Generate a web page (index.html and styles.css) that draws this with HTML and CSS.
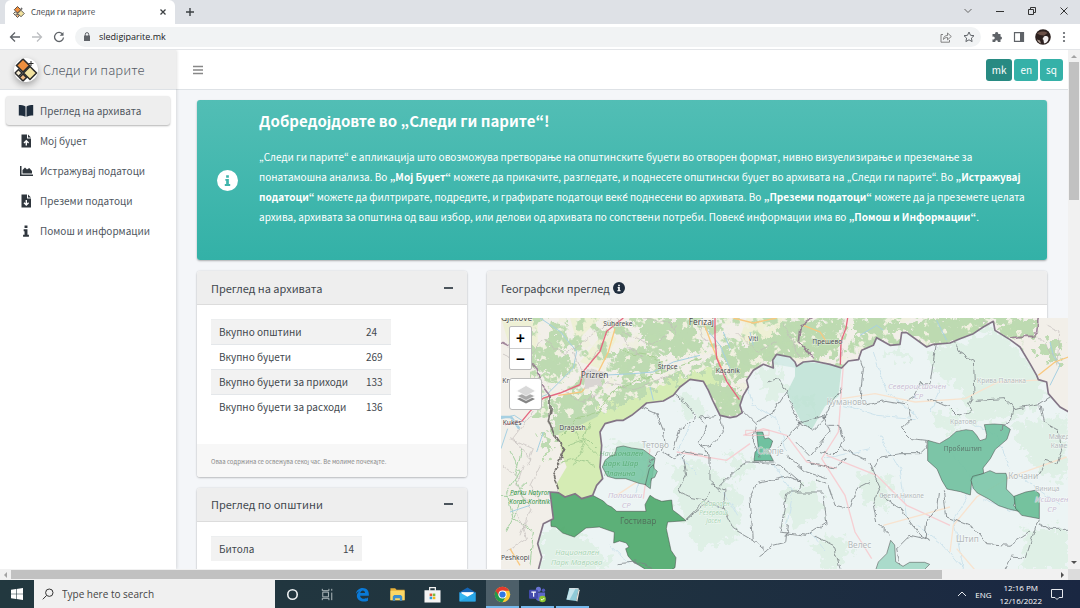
FILE: index.html
```html
<!DOCTYPE html>
<html lang="mk">
<head>
    <meta charset="UTF-8">
    <meta name="viewport" content="width=device-width, initial-scale=1.0">
    <title>Следи ги парите</title>
    <link rel="stylesheet" href="styles.css">
</head>
<body>
    <svg class="sprite" aria-hidden="true">
        <symbol id="logo" viewBox="0 0 24 24">
            <g stroke="#2b2b2b" stroke-width="1.5">
                <path d="M9 1l6.500 6.500L9 14 2.500 7.500z" fill="#ee8f3e"/>
                <path d="M16 8.500l6.500 6.500-6.500 6.500-6.500-6.500z" fill="#f2e2a0"/>
                <path d="M4.500 11.500L8 15l-3.500 3.500L1 15z" fill="#f4ead0"/>
                <path d="M9 16l3.500 3.500L9 23l-3.500-3.500z" fill="#f0b983"/>
                <path d="M17 3v5M14.500 5.500h5" stroke-width="1"/>
            </g>
        </symbol>
        <symbol id="info" viewBox="0 0 24 24">
            <path d="M9.500 2.500h5v4.300h-5zM8 9h6.500v9.500H17V22H7v-3.500h2.500v-6H8z"/>
        </symbol>
    </svg>

    <!-- browser -->
    <header class="tabstrip">
        <div class="tab">
            <svg class="tab-logo"><use href="#logo"/></svg>
            <span class="tab-title">Следи ги парите</span>
            <button class="plain" aria-label="Close tab"><svg width="8" height="8" viewBox="0 0 8 8" stroke="#3c4043" stroke-width="1.300"><path d="M1.500 1.500l5 5M6.500 1.500l-5 5"/></svg></button>
        </div>
        <button class="plain new-tab" aria-label="New tab"><svg width="10" height="10" viewBox="0 0 10 10" stroke="#3c4043" stroke-width="1.400"><path d="M5 1v8M1 5h8"/></svg></button>
        <div class="window-buttons">
            <button class="plain" aria-label="Search tabs"><svg width="10" height="10" viewBox="0 0 10 10" stroke="#666" fill="none"><path d="M1.500 3L5 6.500 8.500 3"/></svg></button>
            <button class="plain" aria-label="Minimize"><svg width="10" height="10" viewBox="0 0 10 10" stroke="#333"><path d="M1 5.500h8"/></svg></button>
            <button class="plain" aria-label="Restore"><svg width="10" height="10" viewBox="0 0 10 10" stroke="#333" fill="none"><path d="M1.500 3.500h5v5h-5zM3.500 3V1.500h5v5H7"/></svg></button>
            <button class="plain" aria-label="Close"><svg width="10" height="10" viewBox="0 0 10 10" stroke="#333"><path d="M1.500 1.500l7 7M8.500 1.500l-7 7"/></svg></button>
        </div>
    </header>
    <div class="toolbar">
        <button class="plain" aria-label="Back"><svg width="12" height="12" viewBox="0 0 12 12" stroke="#5f6368" stroke-width="1.300" fill="none"><path d="M11 6H2M6 1.500L1.500 6 6 10.500"/></svg></button>
        <button class="plain" aria-label="Forward"><svg width="12" height="12" viewBox="0 0 12 12" stroke="#bcbec1" stroke-width="1.300" fill="none"><path d="M1 6h9M6 1.500L10.500 6 6 10.500"/></svg></button>
        <button class="plain" aria-label="Reload"><svg width="12" height="12" viewBox="0 0 12 12" stroke="#5f6368" stroke-width="1.300" fill="none"><path d="M9.800 3.500A4.500 4.500 0 1 0 10.500 6.500"/><path d="M10.500 1v3.800H6.700z" fill="#5f6368" stroke="none"/></svg></button>
        <div class="address">
            <svg width="8" height="9" viewBox="0 0 8 9"><path d="M1 3.500h6V9H1z" fill="#5f6368"/><path d="M2.300 4V2.300a1.700 1.700 0 0 1 3.400 0V4" fill="none" stroke="#5f6368"/></svg>
            <input class="url" type="text" value="sledigiparite.mk" aria-label="Address">
            <button class="plain" aria-label="Share"><svg width="12" height="12" viewBox="0 0 12 12" stroke="#777" stroke-width=".9" fill="none"><path d="M3 3.500H1v7.700h8.500V9M3.500 8.500c0-3 1.700-4 4-4V2L11.300 5.500 7.500 8.800V6.500c-2 0-3 .5-4 2z"/></svg></button>
            <button class="plain" aria-label="Bookmark"><svg width="12" height="12" viewBox="0 0 12 12" stroke="#5f6368" fill="none"><path d="M6 1l1.500 3.300 3.500.4-2.600 2.400.7 3.500L6 8.800l-3.100 1.800.7-3.500L1 4.700l3.500-.4z"/></svg></button>
        </div>
        <button class="plain" aria-label="Extensions"><svg width="12" height="12" viewBox="0 0 12 12" fill="#5f6368"><path d="M1.500 3h2.600a1.600 1.600 0 1 1 3.100 0H9.500v2.500a1.500 1.500 0 1 1 0 3V11H6.800a1.300 1.300 0 1 0-2.500 0H1.500V8.300a1.500 1.500 0 1 0 0-2.600z"/></svg></button>
        <button class="plain" aria-label="Side panel"><svg width="12" height="12" viewBox="0 0 12 12"><path d="M1.500 1.700h9v8.600h-9z" fill="none" stroke="#5f6368" stroke-width="1.200"/><path d="M7 1.500h4v9H7z" fill="#5f6368"/></svg></button>
        <button class="plain" aria-label="Profile"><svg width="16" height="16" viewBox="0 0 16 16"><circle cx="8" cy="8" r="7.800" fill="#2c211f"/><path d="M2 4.500C5 2 10 2 12.500 4L9 6.500 5 6z" fill="#6b5148"/><path d="M9 7.500c3-1 4.500 0 4.500 2S12 14 9.500 14.500C8 13 9.500 11 7.500 10z" fill="#f1eff0"/><path d="M2 10.500l3 1 1 3C3.500 13.500 2.500 12 2 10.500z" fill="#a9988f"/></svg></button>
        <button class="plain menu-dots" aria-label="Menu"><svg width="4" height="12" viewBox="0 0 4 12" fill="#5f6368"><circle cx="2" cy="2" r="1.100"/><circle cx="2" cy="6" r="1.100"/><circle cx="2" cy="10" r="1.100"/></svg></button>
    </div>

    <div class="viewport">
        <aside class="sidebar">
            <a class="brand" href="#">
                <svg class="brand-logo"><use href="#logo"/></svg>
                <span>Следи ги парите</span>
            </a>
            <nav class="nav">
                <a class="nav-link active" href="#"><svg viewBox="0 0 16 14"><path d="M7.500 2.500C6 1.300 3 1 .8 1v10.500c2.200 0 5.200.3 6.700 1.300zM8.500 2.500C10 1.300 13 1 15.200 1v10.500c-2.200 0-5.200.3-6.700 1.300z"/></svg>Преглед на архивата</a>
                <a class="nav-link" href="#"><svg viewBox="0 0 16 14"><path d="M3.500.5h5.500v4h4v9H3.500zM10 .5l3 3h-3z"/><path d="M8.300 11.500V7.500M6 9l2.300-2.300L10.600 9" fill="none" stroke="#fff" stroke-width="1.400"/></svg>Мој буџет</a>
                <a class="nav-link" href="#"><svg viewBox="0 0 16 14"><path d="M2 2h1.500v8.500H15V12H2z"/><path d="M4.500 9.500V6L7 3.500l2 2 2.200-1.500L14 7v2.500z"/></svg>Истражувај податоци</a>
                <a class="nav-link" href="#"><svg viewBox="0 0 16 14"><path d="M3.500.5h5.500v4h4v9H3.500zM10 .5l3 3h-3z"/><path d="M8.300 6v4.500M6 8.700L8.300 11l2.300-2.300" fill="none" stroke="#fff" stroke-width="1.400"/></svg>Преземи податоци</a>
                <a class="nav-link" href="#"><svg><use href="#info"/></svg>Помош и информации</a>
            </nav>
        </aside>

        <main class="main">
            <div class="topbar">
                <button class="plain" aria-label="Мени"><svg width="10" height="10" viewBox="0 0 10 10" stroke="#888" stroke-width="1.400"><path d="M0 1.500h10M0 5h10M0 8.500h10"/></svg></button>
                <div class="languages">
                    <button class="lang current">mk</button>
                    <button class="lang">en</button>
                    <button class="lang">sq</button>
                </div>
            </div>

            <div class="content">
                <section class="banner">
                    <span class="banner-icon"><svg><use href="#info"/></svg></span>
                    <div>
                        <h1>Добредојдовте во „Следи ги парите“!</h1>
                        <p>„Следи ги парите“ е апликација што овозможува претворање на општинските буџети во отворен формат, нивно визуелизирање и преземање за понатамошна анализа. Во <b>„Мој Буџет“</b> можете да прикачите, разгледате, и поднесете општински буџет во архивата на „Следи ги парите“. Во <b>„Истражувај податоци“</b> можете да филтрирате, подредите, и графирате податоци веќе поднесени во архивата. Во <b>„Преземи податоци“</b> можете да ја преземете целата архива, архивата за општина од ваш избор, или делови од архивата по сопствени потреби. Повеќе информации има во <b>„Помош и Информации“</b>.</p>
                    </div>
                </section>

                <div class="row">
                    <div class="col-left">
                        <section class="card">
                            <div class="card-header"><h2>Преглед на архивата</h2><button class="plain collapse" aria-label="Собери"></button></div>
                            <div class="card-body archive">
                                <table>
                                    <tr><td>Вкупно општини</td><td>24</td></tr>
                                    <tr><td>Вкупно буџети</td><td>269</td></tr>
                                    <tr><td>Вкупно буџети за приходи</td><td>133</td></tr>
                                    <tr><td>Вкупно буџети за расходи</td><td>136</td></tr>
                                </table>
                            </div>
                            <div class="card-footer">Оваа содржина се освежува секој час. Ве молиме почекајте.</div>
                        </section>
                        <section class="card">
                            <div class="card-header"><h2>Преглед по општини</h2><button class="plain collapse" aria-label="Собери"></button></div>
                            <div class="card-body">
                                <table class="towns">
                                    <tr><td>Битола</td><td>14</td></tr>
                                </table>
                            </div>
                        </section>
                    </div>

                    <div class="col-right">
                        <section class="card">
                            <div class="card-header"><h2>Географски преглед</h2><span class="hint"><svg><use href="#info"/></svg></span></div>
                            <div class="card-body map-body">
                                <div class="map">
                                    <svg class="map-canvas" viewBox="33 158 1701 756">
                                        <defs>
                                            <filter id="ragged" x="-5%" y="-5%" width="110%" height="110%" color-interpolation-filters="sRGB">
                                                <feTurbulence type="fractalNoise" baseFrequency="0.045" numOctaves="3" seed="4"/>
                                                <feDisplacementMap in="SourceGraphic" scale="70" xChannelSelector="R" yChannelSelector="G"/>
                                            </filter>
                                            <filter id="rough" x="-5%" y="-5%" width="110%" height="110%" color-interpolation-filters="sRGB">
                                                <feTurbulence type="fractalNoise" baseFrequency="0.04" numOctaves="2" seed="9"/>
                                                <feDisplacementMap in="SourceGraphic" scale="18" xChannelSelector="R" yChannelSelector="G"/>
                                            </filter>
                                            <filter id="speckle" x="0" y="0" width="100%" height="100%" color-interpolation-filters="sRGB">
                                                <feTurbulence type="fractalNoise" baseFrequency="0.028" numOctaves="4" seed="12"/>
                                                <feColorMatrix values="0 0 0 0 0.74  0 0 0 0 0.86  0 0 0 0 0.69  12 0 0 0 -6.4"/>
                                                <feComposite in2="SourceGraphic" operator="in"/>
                                            </filter>
                                            <filter id="clearings" x="0" y="0" width="100%" height="100%" color-interpolation-filters="sRGB">
                                                <feTurbulence type="fractalNoise" baseFrequency="0.04" numOctaves="4" seed="31"/>
                                                <feColorMatrix values="0 0 0 0 0.94  0 0 0 0 0.94  0 0 0 0 0.88  12 0 0 0 -7.2"/>
                                                <feComposite in2="SourceGraphic" operator="in"/>
                                            </filter>
                                            <clipPath id="country"><path id="country-shape" d="M145 914l10-39-12-40 17-60 30-15-10-80 25 2 20 13 30-10 20 15 33-10 12-30 18-20-8-35 5-65-5-40 15-25 35-10h20l25-15 25-20 20-17 50-6 30-17 20-25 30-23 40 6 15 27 13 30 12 25 10 20 30 7 20-4 17-11-7-22 10-30 15-25-5-20 20-30 30-18 30 11-2-23 12-18 40 8 15 15 5 13 20-13 30-3 50 10 35 11 20-21 30-4 10-28 35-15 10-23 40 23 30-3 5-35h15l60 43 20-8 50-4 30-13 40-15 30-20 30-17 5 27 45 28 30 22 30 50 20 35 5 13 25 7 5 35 35 40 30 17v477z"/></clipPath>
                                        </defs>
                                        <path fill="#f2efe9" d="M33 158h1701v756H33z"/>
                                        <path fill="#eef0d5" d="M33 158h110v90H60zM770 158h120v60l-80 50-60-50zM240 158h90l-70 70zM270 290l80-100 30 30-50 90z"/>
                                        <g fill="#bddab1" filter="url(#ragged)">
                                            <path d="M180 170l40 10 10 70-50 20zM130 250l60-10 60 60-30 50-60-20zM365 265l80-20 60 15 20 50-90 20-70-10zM430 158h170l20 50 20 50-90 20-80-30zM690 230l80 10 60-20 60-60h170l-10 110-140 10-110 10-60 80-30-60zM620 300l60-20 30 80 50 30-10 70-70 10-40-90-30-40zM350 410l60-60 100-10 120-30 10 30-60 30-60 40-90 30-60 40zM190 400l60-20 60 10 30 50-30 70-60 20-60-30zM1090 158h120v40l-100 70zM1180 170l200-12 100 60-130 30zM1350 158h300l-10 50-80 10-50-60-60 50zM1640 260l40-40 40 20-20 60zM150 500l40 40-20 50z"/>
                                        </g>
                                        <path filter="url(#speckle)" d="M120 158h1480v300H120z"/>
                                        <path filter="url(#clearings)" d="M120 158h1480v300H120z"/>
                                        <path fill="#d5ecb4" filter="url(#ragged)" d="M330 490l-10-50 70-20 90-40 110-50 80-20 10 50-60 0-50 50-80 25-60 40-60 20z"/>
                                        <path fill="#d5ecb4" d="M330 450l-60 30-65 25 10 60 15 40-30 50 15 55 30 0 30-10 50 0 60-90z"/>
                                        <g fill="none" stroke="#a9cf95" stroke-width="3" filter="url(#rough)">
                                            <path d="M215 510l50-50 60-20 40-60 90-40 120-40 60-20M215 590l40-10 60 20M230 540l60-20 30 30M400 260l80 10 40 20-10 40M250 490l30 50-30 60M300 470l-20 60 40 40"/>
                                            <path d="M50 800l50-100-25-60 20-90M33 690h40l40-40M60 560l30 60-40 60 20 80 60 40-10 100" stroke="#a4cfa0"/>
                                        </g>
                                        <g fill="none" stroke="#a6d0e2" stroke-width="3">
                                            <path d="M150 158l60 40 50 60-10 50-80 80-50 20M33 460l40-10 30 20M330 330l100-5 60-5 60-30 80-20M480 365l10 40M720 250l-20-50M790 240l-10-40M1110 210l50-30 20 15M1340 165l30 60M1680 230l10 40 20 30-30 60M33 550l20-60M640 180l50 60 30 70M60 740l60-20M160 500l-20 60"/>
                                            <path d="M33 455h30l25 35" stroke-width="8"/>
                                        </g>
                                        <g fill="none" stroke="#c3bdbb" stroke-width="2" filter="url(#rough)">
                                            <path d="M33 260l60 40 70-80 60 50 80-60 60-50M60 340l60 30M380 158l30 80 50 40M400 200l90 40 70-60M460 158l80 10 20 40M340 350l90 20 110-40M620 158l20 60 40 30M250 260l40 100M100 600l-20 60 40 70-30 80M60 520l70 30-20 50M1060 158l-10 120M1670 180l40 20-10 100M50 860l60-40-30-80M740 200l60 60 60-30M880 170l50 110M330 240l-40 70M150 600l-30 60 40 60M40 600l50 40M130 440l-60 80 50 60M210 370l60 40 50-20M1640 210l50 60M1480 165l30 20"/>
                                        </g>
                                        <g fill="none">
                                            <path d="M375 190l-20 70-30 60-50 60-70 10M640 170l30 80 30 70M730 158l60 15 70-15M940 180l50 20 20 30M60 850l30 50M1645 330l50-40 40-15" stroke="#f9c87f" stroke-width="4"/>
                                            <path d="M400 158l-50 40-20 60-50 60-10 40-60 25-50 15-40 40-25 30-50 10" stroke="#e4677f" stroke-width="4"/>
                                            <path d="M675 158v60l5 60 30 70 38 55M1073 158l-5 30-15 40-2 70" stroke="#e4677f" stroke-width="4"/>
                                        </g>
                                        <path d="M290 310l50 10-10 40-50 10z" fill="#d9d5d2" filter="url(#rough)"/>
                                        <g fill="none" stroke="#8d6d88" stroke-width="5" stroke-opacity=".8" filter="url(#rough)">
                                            <path d="M33 233l25 12M122 290l20 25 10 40 30 40M970 282l-15-25-30-25 5-50 40-24M1560 218l30-5h35l15-15 5-40"/>
                                        </g>
                                        <path d="M180 395v40l-5 30 15 40 35 50-35 75 15 45" fill="none" stroke="#77736f" stroke-width="5" filter="url(#rough)"/>

                                        <use href="#country-shape" fill="#ecf4f4"/>
                                        <g clip-path="url(#country)">
                                            <g fill="#dff0e6" filter="url(#ragged)">
                                                <path d="M150 800l60-10 100 40 60 70-60 30H150zM350 540l110-20 20 60-80 20zM540 600l100-10 60 60 60 40-20 130-110 30-60-120zM560 400l50-20 40 60-60 20zM800 320l60-20 30 80-50 30zM1310 260l120-40 90-40 110 130 40 80-70 60-160 20-30-100-60-30zM1560 480l170-30v200l-90-30zM1600 790h134v124h-134zM870 680l110-30 20 100-100 40zM1100 620l110 20-20 90-70-20zM700 560l100 30-50 60zM900 400l60-10 20 60zM960 830l90-20 40 60-80 50zM1320 440l100 10-40 70zM1180 260l60-20 30 60z"/>
                                            </g>
                                            <path d="M915 285l140 18-10 90-40 30-40 70-30-20-30-60-15-30 25-50z" fill="#b9e0d2" fill-opacity=".75"/>
                                            <path d="M860 262l55 25v20l-90-15z" fill="#c6e4de" fill-opacity=".6"/>
                                            <g fill="none" stroke="#cde3ec" stroke-width="3" filter="url(#rough)">
                                                <path d="M400 560l60 60-30 80M600 480l-40 80 60 70M760 330l30 90 70 40 30 100M850 600l60 80-20 100M1150 260l40 120 100 80M1060 420l100 30 120 10M1170 510l60 100 20 150M1350 370l-30 70M1380 560l80 90-70 110 30 150M1440 470l80 40 40 100M1480 700l90 40M960 800l50 60M700 680l40 70M1600 640l110 80M1000 580l140-30M360 840l60 60M1280 780l80 60 60 70"/>
                                            </g>
                                            <g fill="none" stroke="#f6cfd3" stroke-width="4">
                                                <path d="M1060 300l-15 200-50 80 70 110 30 110 50 80M760 510l60-20 70 20 60 80 90 20M1010 570l150 60 90 90 130 60M560 560l150 25 70-50M480 550l-20 150M600 560l60 20"/>
                                                <path d="M1055 400l100-15 120 25 150-10 100-50 210-10M1180 780l200-55M1380 860l10-80 70-85 100-60 170-60M1400 850l60 70M380 690l90-60" stroke="#f8e3cf"/>
                                            </g>
                                            <g stroke="#444" stroke-opacity=".75" stroke-width="2" stroke-linejoin="round">
                                                <path d="M180 680l25 2 20 13 15-8 15-2 20 15 15-8 18-2 32 17 12 12 13 6 15 13h88l-3-20 15-28 15 10 20 8 30-4 3 30 20 15 20 17-55 4-4 20 14 65 15 22-3 30-32 18-43-3-20-14-32-20-14-16-7-22 10-5-8-12-20-6-18 6 2-32-45-16-40 3-35 27-35-12-20-18-15-2z" fill="#4fa96d" fill-opacity=".92"/>
                                                <path d="M337 605l8-20 15-12 15-5 5-22 20-4 25 6 35 5 20 15 15 10-8 55-10 27-30-6-40-14-30 0-25-7z" fill="#74c3a0" fill-opacity=".85"/>
                                                <path d="M478 610l12-12 3 12 9 8-8 18-10 4-3 30-7-5-8-6z" fill="#74c3a0" fill-opacity=".85"/>
                                                <path d="M800 500h18l6 20 12-2 12 9-6 18-8 10 16 31h-58l3-25 10-12z" fill="#63bb97" fill-opacity=".9"/>
                                                <path d="M1313 525l35 10 30-18 20-18 30-6 20 3 12 14 10 16 18-6 2-12-7-30 30-2 28 2 20 14-10 30-35 30-15 28-22 28 2 16-35 15-5 50-30-10-40-8-15-25-15-35-28-25z" fill="#70c09f" fill-opacity=".9"/>
                                                <path d="M1443 645l5-12 30-8 22-9 18 8 30 0 3 12-2 35 30 30-8 20 20 18-35-8-30-10-30-20-34-18-12-14z" fill="#7cc6a8" fill-opacity=".9"/>
                                                <path d="M1572 693l35-13 28-5 13 10v75l-53-10-18-20z" fill="#68bd95" fill-opacity=".9"/>
                                                <path d="M1155 920l10-30 25-25 12-40 12 14 3 50 22 14 20-12 45 0 15 6-20 20z" fill="#a3d8c6" fill-opacity=".9"/>
                                            </g>
                                            <g fill="none" stroke="#7c8285" stroke-width="2.500" stroke-linejoin="round" filter="url(#rough)">
                                                <path d="M455 425l45 20 20 50 5 40-35 40-15 30M555 385l35 30 30 40-50 40-20 60M690 450l-60 5 20 30-25 50 35 30v80l30 30M690 450l10 50-35 40-30 5M760 437l40 40-10 50 20 50M800 470l50-30 40-60-25-40-30 10M890 385l15 40 25 50 40 20 30-30 20-45 35-50M790 590l80 10 70 60M850 590h-80l-30 20-50 50M665 655l40 20-5 55-40-20-30 20-45 35M700 730l30 60 60 35 35 30M790 825l-10-130 20-40 90-20 40 15-5 30M810 870l40-30 40-10 5-50M520 560l30 20 30-20 80 10M580 570l10 60-25 50 30 15 50 10M870 540l60-70 70-20 20 50-60 70-40-40M1015 480l30 0 15 45-10 20-20 20-40-10M1110 280l10 30-10 90 15 20 60-15 60 10 30-20 15-40h30l20-130 15-10M1390 225l20 40 40 20 5 100-20 30 10 20-40 15-30-30-60-20M1255 420l10 40-30 30 30 30 45 5 3 20-20 20-60 0-60 10-20 30M1460 405l80-5 30 25-10 40-30 25M1570 430l80-15 30-20M1650 420l10 50 45 25 10 60-15 40-35-10-20 50M1140 590l20 50 10 20-20 60 10 50 40 40M1170 690l60 40 60 80 30 15M1345 680l-5 50-30 40-5 50-45-10-40 40 10 50M1360 675l10 80 80 30 40 50 70 5 60-40M1645 760l-20 60-20 60-40-5-20 40M1648 775l30 17h60M1140 650l-40 20-20 60-45-10-20-60-40-20M1010 640l-60-20-60-50M970 810l60 30 20 70M870 800l80 10 60-40-10-90-110 0-15 100zM380 895l60-5 50 20M585 765l60-60 15-20M950 590l80 20 40-30M1050 545l80 40"/>
                                            </g>
                                        </g>
                                        <use href="#country-shape" fill="none" stroke="#837586" stroke-width="5" stroke-linejoin="round"/>
                                        <path fill="none" stroke="#f4b9be" stroke-width="2" d="M767 495h70v15h-70z"/>

                                        <g class="map-text">
                                            <text x="33" y="167" class="town">Gjakove</text>
                                            <text x="340" y="182">Suhareke</text>
                                            <text x="596" y="180" class="town">Ferizaj</text>
                                            <text x="775" y="226">Viti</text>
                                            <text x="503" y="311">Štrpce</text>
                                            <text x="272" y="338" class="town">Prizren</text>
                                            <text x="677" y="322">Kaçanik</text>
                                            <text x="967" y="237">Прешево</text>
                                            <text x="37" y="353">Kru</text>
                                            <text x="38" y="478">Kukës</text>
                                            <text x="208" y="494">Dragash</text>
                                            <text x="33" y="883">Peshkopi</text>
                                        </g>
                                        <g class="map-text faint">
                                            <text x="1010" y="418" class="town">Куманово</text>
                                            <text x="455" y="549" class="town">Тетово</text>
                                            <text x="802" y="566" class="town">Скопје</text>
                                            <text x="1461" y="352">Крива Паланка</text>
                                            <text x="1380" y="476">Кратово</text>
                                            <text x="1168" y="698">Свети Николе</text>
                                            <text x="1073" y="849" class="town">Велес</text>
                                            <text x="1398" y="830" class="town">Штип</text>
                                            <text x="1555" y="640" class="town">Кочани</text>
                                            <text x="1635" y="677">Виница</text>
                                            <text x="1676" y="522">Макед</text>
                                            <text x="1682" y="547">Каме</text>
                                            <g class="region">
                                                <text x="1194" y="370">Североисточен</text>
                                                <text x="1272" y="400">СР</text>
                                                <text x="354" y="698">Полошки</text>
                                                <text x="395" y="729">СР</text>
                                                <text x="1635" y="711">Источен</text>
                                                <text x="1672" y="741">СР</text>
                                            </g>
                                            <g class="park">
                                                <text x="196" y="869">Национален</text>
                                                <text x="183" y="899">Парк Маврово</text>
                                                <text x="632" y="723" class="small">Природен</text>
                                                <text x="628" y="748" class="small">Резерват</text>
                                                <text x="648" y="773" class="small">Јасен</text>
                                            </g>
                                        </g>
                                        <g class="map-text park strong">
                                            <text x="328" y="572" opacity=".45">Национален</text>
                                            <text x="340" y="602" opacity=".45">парк Шар</text>
                                            <text x="342" y="632" opacity=".45">Планина</text>
                                            <text x="60" y="690" class="small">Parku Natyror</text>
                                            <text x="58" y="715" class="small">Korab-Koritnik</text>
                                        </g>
                                        <g class="map-text plain-text" opacity=".6">
                                            <text x="390" y="775" class="town">Гостивар</text>
                                            <text x="1361" y="557">Пробиштип</text>
                                        </g>
                                    </svg>
                                    <div class="zoom-control">
                                        <button aria-label="Зголеми">+</button>
                                        <button aria-label="Намали">−</button>
                                    </div>
                                    <button class="layers" aria-label="Слоеви"><svg width="20" height="20" viewBox="0 0 20 20"><path d="M10 11l9 4-9 4.500L1 15z" fill="#858585"/><path d="M10 8l9 4-9 4.500L1 12z" fill="#aaa" stroke="#fff" stroke-width=".7"/><path d="M10 1.500L19.500 7 10 12 .5 7z" fill="#d9d9d9" stroke="#fff" stroke-width=".7"/></svg></button>
                                </div>
                            </div>
                        </section>
                    </div>
                </div>
            </div>
        </main>
        <div class="vscroll"><i class="arrow up"></i><div class="vthumb"></div><i class="arrow down"></i></div>
    </div>
    <div class="hscroll"><i class="arrow left"></i><div class="htrack"><div class="hthumb"></div></div><i class="arrow right"></i><span class="corner"></span></div>

    <!-- taskbar -->
    <footer class="taskbar">
        <button class="plain start" aria-label="Start"><svg width="12" height="12" viewBox="0 0 12 12" fill="#fff"><path d="M0 1.700l5-.7v4.700H0zM5.600.9L12 0v5.700H5.600zM0 6.300h5V11l-5-.7zM5.600 6.300H12V12l-6.400-.9z"/></svg></button>
        <label class="search">
            <svg width="12" height="12" viewBox="0 0 12 12" fill="none" stroke="#333"><circle cx="7.300" cy="4.700" r="3.700"/><path d="M4.500 7.500L.8 11.300"/></svg>
            <input type="text" placeholder="Type here to search">
        </label>
        <div class="apps">
            <button class="plain" aria-label="Cortana"><svg viewBox="0 0 18 18" fill="none" stroke="#eef2f3" stroke-width="1.700"><circle cx="9" cy="9" r="5"/></svg></button>
            <button class="plain" aria-label="Task view"><svg viewBox="0 0 18 18" fill="none" stroke="#b8c1c5"><path d="M4 6.500h6v5H4zM3.500 3v2h7V3M3.500 15v-2h7v2M13.500 3v2M13.500 7v8"/></svg></button>
            <button class="plain" aria-label="Edge"><svg viewBox="0 0 18 18"><path d="M2 8.300C2.500 4.500 5.500 2 9.200 2c4.300 0 6.500 3 6.500 6.500v1.800H6.500c.2 3.800 5.500 4 8.300 2v3.200C10.500 17.500 3.500 16.500 3 10.500c0-2.500 1.500-4.500 3.500-5.300C4.500 5.500 3 6.800 2 8.300zM6.700 7.500h5C11.700 3.700 7 4 6.700 7.500z" fill="#0a7ad8"/></svg></button>
            <button class="plain" aria-label="Explorer"><svg viewBox="0 0 18 18"><path d="M1.500 2.500h5l1.500 1.500h8.500V15h-15z" fill="#e8b13a"/><path d="M1.500 5h15v10h-15z" fill="#fcd766"/><path d="M4 15.500V11l1.500-1.500h7L14 11v4.500h-2.500V13h-5v2.500z" fill="#3e8fce"/></svg></button>
            <button class="plain" aria-label="Store"><svg viewBox="0 0 18 18"><path d="M6 5V1.700h6V5" fill="none" stroke="#f4f4f4" stroke-width="1.300"/><path d="M.5 4.500h17v13H.5z" fill="#f4f4f4"/><path d="M6 8h2.700v2.700H6z" fill="#e8562d"/><path d="M9.300 8H12v2.700H9.300z" fill="#7db93c"/><path d="M6 11.300h2.700V14H6z" fill="#2da0df"/><path d="M9.300 11.300H12V14H9.300z" fill="#f6b81c"/></svg></button>
            <button class="plain" aria-label="Mail"><svg viewBox="0 0 18 18"><path d="M.5 6.500L9 1.500l8.500 5V16H.5z" fill="#1565b5"/><path d="M2.500 6.500h13V12h-13z" fill="#fff"/><path d="M.5 6.500l8.500 5 8.500-5V16.500H.5z" fill="#36b7f0"/><path d="M17.500 6.500v10H.5z" fill="#1a93dc" opacity=".5"/></svg></button>
            <button class="plain running focused" aria-label="Chrome"><svg viewBox="0 0 18 18"><circle cx="9" cy="9" r="8.200" fill="#fcc934"/><path d="M9 9H.8A8.200 8.200 0 0 1 1.900 4.900 8.200 8.200 0 0 1 16.100 4.900H9z" fill="#e33b2e"/><path d="M1.900 4.900A8.200 8.200 0 0 0 9 17.200l3.600-6.100L9 13 5.400 11z" fill="#229b4b"/><circle cx="9" cy="9" r="4.300" fill="#fff"/><circle cx="9" cy="9" r="3.300" fill="#2f78e6"/></svg></button>
            <button class="plain running" aria-label="Teams"><svg viewBox="0 0 18 18"><circle cx="10" cy="3.500" r="2.700" fill="#6a74d4"/><circle cx="15.300" cy="4.500" r="1.800" fill="#5058b8"/><path d="M7 7h10v5c0 3-2 4-4 3.500-3 1.500-6-.5-6-3z" fill="#5d66c9"/><rect y="4" width="9.500" height="9.500" rx="1" fill="#434bad"/><path d="M2.500 6.500h4.800M4.900 6.500v5" stroke="#fff" stroke-width="1.200"/><circle cx="14.300" cy="13.800" r="3.500" fill="#8cc52f"/><path d="M12.600 13.800l1.300 1.300 2.200-2.300" fill="none" stroke="#fff"/></svg></button>
            <button class="plain running" aria-label="Notepad"><svg viewBox="0 0 18 18"><path d="M5.500 2.500l10 .5-2.500 13-10.500-1.500z" fill="#8fcad7"/><path d="M6 3l6 .3L6 14.500l-3.300-.6z" fill="#c5e5ec"/><path d="M15.500 3l1 1.500-2.300 11.800-1.400-.3z" fill="#e8e3da"/><path d="M5.500 2l10 .5v1l-10-.5z" fill="#e9eef0"/></svg></button>
        </div>
        <div class="tray">
            <svg width="10" height="10" viewBox="0 0 10 10" fill="none" stroke="#e6e9ee"><path d="M1 7l4-4 4 4"/></svg>
            <span>ENG</span>
            <span class="clock">12:16 PM<br>12/16/2022</span>
            <svg width="14" height="14" viewBox="0 0 14 14" fill="none" stroke="#e6e9ee"><path d="M1.500 2.500h11v8H9L7 12.500l-2-2H1.500z"/></svg>
        </div>
    </footer>
</body>
</html>
```
FILE: styles.css
```css
* {
    box-sizing: border-box;
}

body {
    margin: 0;
    height: 100vh;
    display: flex;
    flex-direction: column;
    overflow: hidden;
    font-family: "Noto Sans CJK KR", "Noto Sans", sans-serif;
    font-size: 10px;
    line-height: 16px;
    color: #42484e;
}

h1, h2, p {
    margin: 0;
}

a {
    color: inherit;
    text-decoration: none;
}

svg {
    display: block;
    flex: none;
}

button, input {
    font: inherit;
    color: inherit;
}

.plain {
    display: flex;
    align-items: center;
    justify-content: center;
    padding: 0;
    border: 0;
    background: none;
}

.sprite {
    position: absolute;
    width: 0;
    height: 0;
}

/* browser */
.tabstrip {
    display: flex;
    flex: none;
    height: 24px;
    padding-left: 5px;
    background: #dee1e6;
}

.tab {
    display: flex;
    align-items: center;
    gap: 6px;
    width: 170px;
    height: 24px;
    padding: 0 8px;
    border-radius: 6px 6px 0 0;
    background: #fff;
}

.tab-logo {
    width: 12px;
    height: 12px;
}

.tab-title {
    flex: 1;
    font-size: 8px;
    color: #45494d;
}

.new-tab {
    height: 24px;
    margin-left: 10px;
}

.window-buttons {
    display: flex;
    gap: 22px;
    height: 21px;
    margin-left: auto;
    padding-right: 11px;
}

.toolbar {
    display: flex;
    align-items: center;
    flex: none;
    gap: 10px;
    height: 26px;
    padding: 0 13px 0 9px;
    border-bottom: 1px solid #e3e5e8;
    background: #fff;
}

.address {
    display: flex;
    align-items: center;
    flex: 1;
    gap: 11px;
    height: 20px;
    padding: 0 6px 0 8px;
    border-radius: 10px;
    background: #f1f3f4;
}

.url {
    flex: 1;
    min-width: 0;
    padding: 0;
    margin-left: -3px;
    border: 0;
    background: none;
    font-family: "Open Sans", "Noto Sans", sans-serif;
    font-size: 9px;
    color: #202124;
}

.menu-dots {
    width: 6px;
}

/* layout */
.viewport {
    display: flex;
    flex: 1;
    min-height: 0;
    overflow: hidden;
}

.sidebar {
    flex: none;
    width: 176px;
    background: #fff;
    box-shadow: 1px 0 3px rgba(0, 0, 0, 0.12);
    z-index: 1;
}

.brand {
    display: flex;
    align-items: center;
    gap: 5px;
    height: 40px;
    padding-left: 14px;
    border-bottom: 1px solid #dee2e6;
    background: #eee;
    font-size: 13px;
    font-weight: 300;
    color: #555b66;
}

.brand-logo {
    width: 24px;
    height: 24px;
    border-radius: 50%;
    background: #fff;
    box-shadow: 0 3px 6px rgba(0, 0, 0, 0.3);
}

.nav {
    padding: 6px;
}

.nav-link {
    display: flex;
    align-items: center;
    gap: 6px;
    height: 29px;
    margin-bottom: 1px;
    padding-left: 12px;
    border-radius: 3px;
    color: #50575f;
}

.nav-link svg {
    width: 16px;
    height: 14px;
    fill: #2f363d;
}

.nav-link.active {
    background: #eee;
    box-shadow: 0 1px 2px rgba(0, 0, 0, 0.3);
}

.nav-link.active svg {
    fill: #1f2d3d;
}

.main {
    flex: 1;
    min-width: 0;
    overflow: hidden;
    background: #f4f6f9;
}

.topbar {
    display: flex;
    align-items: center;
    justify-content: space-between;
    height: 40px;
    padding: 0 5px 0 17px;
    border-bottom: 1px solid #dee2e6;
    background: #fff;
}

.languages {
    display: flex;
    gap: 2px;
}

.lang {
    height: 22px;
    padding: 0 6px;
    border: 0;
    border-radius: 3px;
    background: #35b1a8;
    color: #fff;
}

.lang.current {
    background: #288a82;
}

.content {
    padding: 10px 21px;
}

.banner {
    display: flex;
    align-items: center;
    gap: 21px;
    height: 160px;
    padding: 0 15px 0 20px;
    border-radius: 3px;
    background: linear-gradient(#52beb5, #33b1a7);
    box-shadow: 0 1px 2px rgba(0, 0, 0, 0.3);
    color: #fff;
}

.banner-icon {
    display: flex;
    align-items: center;
    justify-content: center;
    flex: none;
    width: 21px;
    height: 21px;
    border-radius: 50%;
    background: #fff;
}

.banner-icon svg {
    width: 13px;
    height: 13px;
    fill: #40b5ac;
}

.banner h1 {
    margin-bottom: 16px;
    font-size: 15px;
    line-height: 20px;
}

.banner p {
    padding-bottom: 22px;
    line-height: 20px;
}

.row {
    display: flex;
    gap: 20px;
    margin-top: 11px;
}

.col-left {
    flex: 270;
    min-width: 0;
}

.col-right {
    flex: 560;
    min-width: 0;
}

.card {
    margin-bottom: 11px;
    border-radius: 3px;
    background: #fff;
    box-shadow: 0 0 2px rgba(0, 0, 0, 0.15), 0 1px 2px rgba(0, 0, 0, 0.2);
}

.card-header {
    display: flex;
    align-items: center;
    gap: 3px;
    height: 34px;
    padding: 0 14px;
    border-bottom: 1px solid #dcdcdc;
    border-radius: 3px 3px 0 0;
    background: #eee;
}

.card-header h2 {
    font-size: 11px;
    font-weight: 400;
}

.collapse {
    width: 9px;
    height: 2px;
    margin-left: auto;
    background: #4b545c;
}

.hint {
    display: flex;
    align-items: center;
    justify-content: center;
    width: 12px;
    height: 12px;
    border-radius: 50%;
    background: #1f2d3d;
}

.hint svg {
    width: 8px;
    height: 8px;
    fill: #fff;
}

.card-body {
    padding: 14px;
}

.archive {
    padding-bottom: 24px;
}

.map-body {
    padding-top: 13px;
}

table {
    width: 180px;
    border-collapse: collapse;
}

td {
    height: 25px;
    padding: 0 8px;
    border-top: 1px solid #e4e7ea;
}

tr:nth-child(odd) {
    background: #f2f2f2;
}

tr:first-child td {
    border-top-color: #eceeef;
}

.towns {
    width: 151px;
}

.towns td:last-child {
    text-align: right;
}

.card-footer {
    height: 33px;
    padding: 0 14px;
    border-radius: 0 0 3px 3px;
    background: #f7f7f7;
    font-size: 6px;
    line-height: 36px;
    color: #888;
}

/* map */
.map {
    position: relative;
    width: 567px;
    height: 400px;
    background: #f2efe9;
}

.map-canvas {
    width: 567px;
    height: 252px;
}

.map-text {
    font-family: "Noto Sans", sans-serif;
    font-size: 20px;
    fill: #4a4a4a;
    stroke: #fff;
    stroke-opacity: 0.6;
    stroke-width: 3px;
    paint-order: stroke;
}

.map-text .town {
    font-size: 25px;
}

.faint {
    fill: #b3b9bb;
}

.faint .region {
    font-size: 24px;
    font-style: italic;
    fill: #cabfd5;
}

.park {
    font-size: 23px;
    font-style: italic;
}

.faint .park {
    fill: #a9d5b5;
}

.park.strong {
    fill: #2a8f3c;
    stroke-opacity: 0.2;
}

.plain-text {
    stroke: none;
}

.park .small {
    font-size: 19px;
}

.zoom-control {
    position: absolute;
    top: 8px;
    left: 8px;
    width: 23px;
    border: 1px solid #bbb;
    border-radius: 2px;
    background: #fff;
}

.zoom-control button {
    display: block;
    width: 21px;
    height: 21px;
    padding: 0;
    border: 0;
    background: none;
    color: #000;
    font-size: 15px;
    font-weight: 700;
    line-height: 20px;
}

.zoom-control button + button {
    border-top: 1px solid #ccc;
}

.layers {
    position: absolute;
    top: 60px;
    left: 8px;
    display: flex;
    align-items: center;
    justify-content: center;
    width: 33px;
    height: 32px;
    padding: 0;
    border: 1px solid #bbb;
    border-radius: 3px;
    background: #fff;
}

/* scrollbars */
.vscroll {
    display: flex;
    flex-direction: column;
    align-items: center;
    flex: none;
    width: 12px;
    padding: 5px 1px;
    background: #f1f1f1;
}

.vthumb {
    width: 10px;
    height: 138px;
    margin: 4px 0 auto;
    background: #c1c1c1;
}

.hscroll {
    display: flex;
    align-items: center;
    flex: none;
    height: 11px;
    padding-left: 4px;
    background: #f1f1f1;
}

.htrack {
    flex: 1;
    margin: 0 4px;
}

.hthumb {
    width: 89%;
    height: 9px;
    background: #c1c1c1;
}

.corner {
    width: 12px;
    height: 11px;
    margin-left: 4px;
    background: #dcdcdc;
}

.arrow {
    border: 3px solid transparent;
}

.arrow.up {
    border-top-width: 0;
    border-bottom-color: #a3a3a3;
}

.arrow.down {
    border-bottom-width: 0;
    border-top-color: #505050;
}

.arrow.left {
    border-left-width: 0;
    border-right-color: #a3a3a3;
}

.arrow.right {
    border-right-width: 0;
    border-left-color: #505050;
}

/* taskbar */
.taskbar {
    display: flex;
    flex: none;
    height: 28px;
    background: linear-gradient(90deg, #22383f, #20343f 50%, #1a2742);
    color: #fff;
    font-family: "Open Sans", "Noto Sans", sans-serif;
}

.start {
    width: 34px;
}

.search {
    display: flex;
    align-items: center;
    gap: 8px;
    width: 241px;
    padding-left: 8px;
    background: #f0f0f0;
}

.search input {
    flex: 1;
    min-width: 0;
    padding: 0;
    border: 0;
    background: none;
}

.search input::placeholder {
    color: #444;
    opacity: 1;
}

.apps {
    display: flex;
}

.apps button {
    width: 33px;
    margin: 0 1px;
}

.apps svg {
    width: 17px;
    height: 17px;
}

.running {
    box-shadow: inset 0 -2px #76b9ed;
}

.focused {
    background: #4d5f69;
}

.tray {
    display: flex;
    align-items: center;
    gap: 8px;
    margin-left: auto;
    padding-right: 16px;
    font-size: 8px;
    line-height: 13px;
}

.clock {
    text-align: center;
}
```
